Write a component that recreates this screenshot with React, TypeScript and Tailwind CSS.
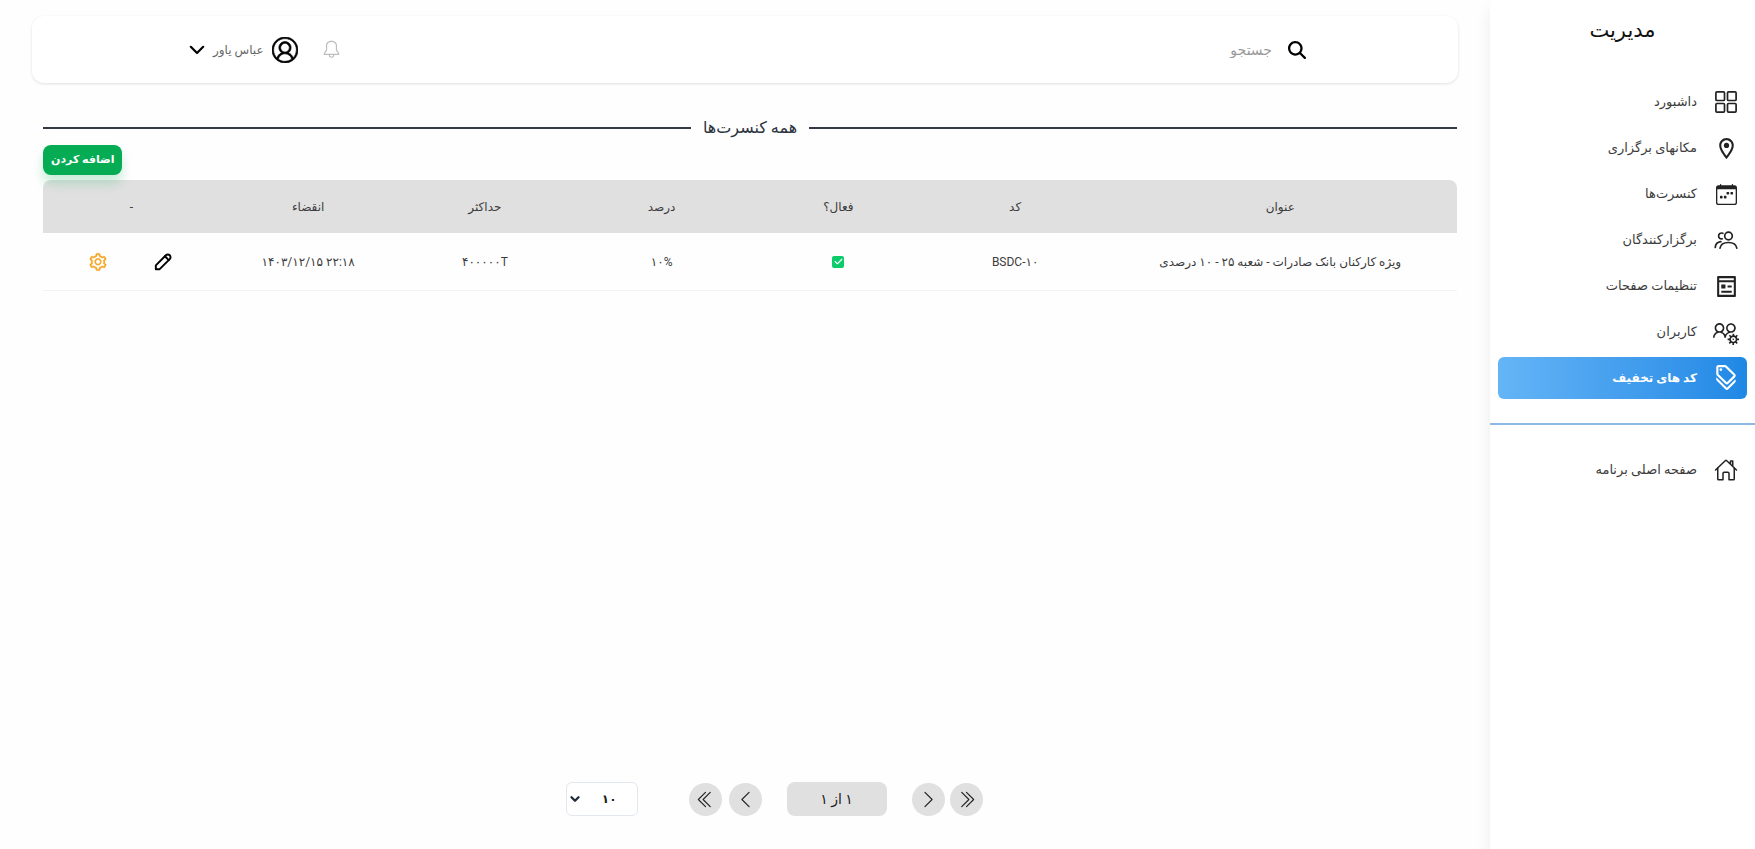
import type { ReactNode } from "react";
import { AiOutlineSetting } from "react-icons/ai";
import { BsCalendarWeek, BsChevronDoubleLeft, BsChevronDoubleRight, BsChevronLeft, BsChevronRight } from "react-icons/bs";
import { FaCheck, FaMagnifyingGlass } from "react-icons/fa6";
import { GoBell } from "react-icons/go";
import { IoHomeOutline } from "react-icons/io5";
import { LiaUsersCogSolid } from "react-icons/lia";
import { LuChevronDown } from "react-icons/lu";
import { MdOutlineDiscount, MdOutlineLocationOn } from "react-icons/md";
import { RiPagesLine } from "react-icons/ri";
import { TbPencil } from "react-icons/tb";
import { VscAccount } from "react-icons/vsc";

function DashboardIcon() {
  return (
    <svg viewBox="0 0 24 24" width="24" height="24" fill="none" stroke="currentColor" strokeWidth="1.7">
      <rect x="1.900" y="1.900" width="8.600" height="8.600" rx="1" />
      <rect x="13.500" y="1.900" width="8.600" height="8.600" rx="1" />
      <rect x="1.900" y="13.500" width="8.600" height="8.600" rx="1" />
      <rect x="13.500" y="13.500" width="8.600" height="8.600" rx="1" />
    </svg>
  );
}

function OrganizersIcon() {
  return (
    <svg viewBox="0 0 24 24" width="24" height="24" fill="none" stroke="currentColor" strokeWidth="1.7" strokeLinecap="round">
      <circle cx="14.500" cy="8" r="3.800" />
      <path d="M6 20.200c.6-3.700 4-5.700 8.400-5.700s7.800 2 8.400 5.700" />
      <path d="M8.900 5.300c-2.300-.9-4.300.4-4.300 2.600s1.700 3.400 3.700 2.900" />
      <path d="M1.300 19.500c.1-3.500 2-5.500 5.600-5.900" />
    </svg>
  );
}

const menu: { label: string; icon: ReactNode; active?: boolean }[] = [
  { label: "داشبورد", icon: <DashboardIcon /> },
  { label: "مکانهای برگزاری", icon: <MdOutlineLocationOn size={25} /> },
  { label: "کنسرت‌ها", icon: <BsCalendarWeek size={21} /> },
  { label: "برگزارکنندگان", icon: <OrganizersIcon /> },
  { label: "تنظیمات صفحات", icon: <RiPagesLine size={25} /> },
  { label: "کاربران", icon: <LiaUsersCogSolid size={26} /> },
  { label: "کد های تخفیف", icon: <MdOutlineDiscount size={26} />, active: true },
];

const columns = ["کد", "فعال؟", "درصد", "حداکثر", "انقضاء", "-"];

function MenuLink({ label, icon, active }: { label: string; icon: ReactNode; active?: boolean }) {
  return (
    <a
      href="#"
      aria-current={active ? "page" : undefined}
      className={
        active
          ? "flex h-[42px] items-center gap-4 rounded-md bg-linear-to-l from-[#1e88e5] to-[#64b5f6] px-2 text-xs font-bold text-white"
          : "flex h-[42px] items-center gap-4 rounded-md px-2 text-[13px] text-[#3c3c3c]"
      }
    >
      <span className={active ? "flex w-[26px] justify-center" : "flex w-[26px] justify-center text-[#222]"}>{icon}</span>
      <span>{label}</span>
    </a>
  );
}

function RoundButton({ label, children }: { label: string; children: ReactNode }) {
  return (
    <button type="button" aria-label={label} className="flex size-[33px] items-center justify-center rounded-full bg-[#e0e0e0] text-[#222]">
      {children}
    </button>
  );
}

export default function App() {
  return (
    <div dir="rtl" className="flex min-h-screen bg-[#fefefe] font-[Roboto,'DejaVu_Sans',sans-serif] text-[#3c3c3c]">
      <aside className="w-[265px] shrink-0 bg-white shadow-[0_10px_15px_rgba(0,0,0,0.08)]">
        <h1 className="pt-4 text-center text-[21px] leading-7 text-[#111]">مدیریت</h1>
        <nav aria-label="مدیریت">
          <div className="flex flex-col gap-1 px-2 pt-[37px]">
            {menu.map((item) => (
              <MenuLink key={item.label} {...item} />
            ))}
          </div>
          <hr className="my-6 border-t-2 border-[#8db9e2]" />
          <div className="px-2">
            <MenuLink label="صفحه اصلی برنامه" icon={<IoHomeOutline size={24} stroke="currentColor" strokeWidth={8} />} />
          </div>
        </nav>
      </aside>

      <div className="flex min-w-0 flex-1 flex-col px-8 pt-4 pb-[33px]">
        <header className="flex h-[67px] items-center justify-between rounded-xl bg-white pr-[152px] pl-[157px] shadow-[0_1px_3px_rgba(0,0,0,0.12)]">
          <label className="flex items-center gap-4">
            <FaMagnifyingGlass size={18} className="text-black" aria-hidden="true" />
            <input type="search" aria-label="جستجو" placeholder="جستجو" className="w-44 bg-transparent text-sm outline-none placeholder:text-[#999]" />
          </label>
          <div className="flex items-center gap-6">
            <button type="button" aria-label="اعلان‌ها" className="text-[#bdbdbd]">
              <GoBell size={19} />
            </button>
            <button type="button" className="flex items-center gap-2 text-xs text-[#666]">
              <VscAccount size={26} stroke="currentColor" strokeWidth={0.4} className="text-black" />
              <span>عباس یاور</span>
              <svg viewBox="0 0 16 10" width="16" height="10" fill="none" stroke="#000" strokeWidth="2.200" strokeLinecap="round" strokeLinejoin="round" aria-hidden="true">
                <path d="m1.800 1.800 6.200 6.200 6.200-6.200" />
              </svg>
            </button>
          </div>
        </header>

        <main className="flex flex-1 flex-col pt-8 pr-px pl-[11px]">
          <div className="flex items-center gap-3 pt-px">
            <span className="h-[2px] flex-1 bg-[#333a46]" />
            <h2 className="text-base leading-6 text-[#2c3440]">همه کنسرت‌ها</h2>
            <span className="h-[2px] flex-1 bg-[#333a46]" />
          </div>

          <div className="relative flex justify-end py-[5px]">
            <button type="button" className="h-[30px] rounded-lg bg-[#05ac54] px-2 text-[11px] font-bold text-white shadow-[0_8px_12px_rgba(5,172,84,0.22)]">
              اضافه کردن
            </button>
          </div>

          <table className="w-full table-fixed border-separate border-spacing-0 text-center text-xs">
            <thead>
              <tr className="h-[53px]">
                <th scope="col" className="w-1/4 rounded-tr-lg bg-[#e0e0e0] font-normal">عنوان</th>
                {columns.map((column) => (
                  <th key={column} scope="col" className="w-1/8 bg-[#e0e0e0] font-normal last:rounded-tl-lg">
                    {column}
                  </th>
                ))}
              </tr>
            </thead>
            <tbody>
              <tr className="h-[58px] *:border-b *:border-[#f2f2f2]">
                <td>ویژه کارکنان بانک صادرات - شعبه ۲۵ - ۱۰ درصدی</td>
                <td dir="ltr">BSDC-۱۰</td>
                <td>
                  <span role="img" aria-label="فعال" className="mx-auto flex size-3 items-center justify-center rounded-[2px] bg-[#0ccb6b] text-white">
                    <FaCheck size={9} />
                  </span>
                </td>
                <td dir="ltr">۱۰%</td>
                <td dir="ltr">۴۰۰۰۰۰T</td>
                <td dir="ltr">۱۴۰۳/۱۲/۱۵ ۲۲:۱۸</td>
                <td>
                  <div className="flex items-center justify-evenly">
                    <button type="button" aria-label="ویرایش" className="text-black">
                      <TbPencil size={23} />
                    </button>
                    <button type="button" aria-label="تنظیمات" className="text-[#f5a623]">
                      <AiOutlineSetting size={20} stroke="currentColor" strokeWidth={16} />
                    </button>
                  </div>
                </td>
              </tr>
            </tbody>
          </table>

          <div className="mt-auto flex items-center justify-center pl-12">
            <div className="flex gap-[5px]">
              <RoundButton label="صفحه اول"><BsChevronDoubleRight size={19} /></RoundButton>
              <RoundButton label="صفحه قبل"><BsChevronRight size={19} /></RoundButton>
            </div>
            <p className="mx-[25px] flex h-[34px] w-[100px] items-center justify-center rounded-lg bg-[#e0e0e0] text-sm text-[#222]">۱ از ۱</p>
            <div className="flex gap-[7px]">
              <RoundButton label="صفحه بعد"><BsChevronLeft size={19} /></RoundButton>
              <RoundButton label="صفحه آخر"><BsChevronDoubleLeft size={19} /></RoundButton>
            </div>
            <div className="relative mr-[51px]">
              <select aria-label="تعداد در صفحه" defaultValue="10" className="h-[34px] w-[72px] appearance-none rounded-md border border-[#e2e8ee] bg-white pr-5 text-xs font-bold text-[#222]">
                <option value="10">۱۰</option>
                <option value="20">۲۰</option>
                <option value="50">۵۰</option>
              </select>
              <LuChevronDown size={14} strokeWidth={4} className="pointer-events-none absolute top-[10px] left-[2px] text-[#222b38]" />
            </div>
          </div>
        </main>
      </div>
    </div>
  );
}
